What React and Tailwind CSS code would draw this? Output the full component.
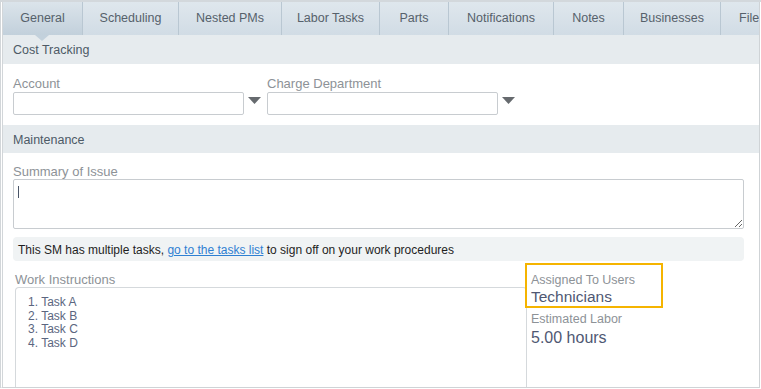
const tabs = [
  { name: 'General', w: 'w-[80px]', active: true },
  { name: 'Scheduling', w: 'w-[96px]' },
  { name: 'Nested PMs', w: 'w-[103px]' },
  { name: 'Labor Tasks', w: 'w-[98px]' },
  { name: 'Parts', w: 'w-[69px]' },
  { name: 'Notifications', w: 'w-[105px]' },
  { name: 'Notes', w: 'w-[70px]' },
  { name: 'Businesses', w: 'w-[97px]' },
  { name: 'Files', w: 'w-[80px]', left: true },
];

const tasks = ['Task A', 'Task B', 'Task C', 'Task D'];

function Caret() {
  return (
    <svg width="13" height="8" viewBox="0 0 13 8" className="ml-[4px] mt-[-6px] shrink-0">
      <path d="M0 0 H13 L6.5 7 Z" fill="#666a6e" />
    </svg>
  );
}

function SectionHeader({ children, h }) {
  return (
    <div className={`${h} flex items-center bg-[#e6ebee] pl-[10px] pt-[2px] text-[12.5px] text-[#4d5a66]`}>
      {children}
    </div>
  );
}

function SelectField({ label }) {
  return (
    <div className="flex flex-col">
      <div className="h-[16px] text-[13px] leading-[18px] text-[#8d9297] mb-[1px]">{label}</div>
      <div className="flex items-center">
        <div className="h-[23px] w-[231px] rounded-[2px] border border-[#c8ccd0] bg-white" />
        <Caret />
      </div>
    </div>
  );
}

export default function App() {
  return (
    <div className="h-[389px] w-[761px] overflow-hidden bg-white font-['Liberation_Sans',Arial,sans-serif]">
      <div className="h-[2px] bg-[#d3d8dc]" />
      <div className="flex h-[386px] w-[760px] flex-col overflow-hidden border-b border-l-[3px] border-r border-double border-b-[#cfd3d6] border-l-[#d2d6d9] border-r-[#cfd3d6] border-b-solid">
        {/* tab strip */}
        <div className="relative flex h-[33px] shrink-0 overflow-hidden">
          {tabs.map((t) => (
            <div
              key={t.name}
              className={`${t.w} flex h-full shrink-0 items-center border-r border-[#b9c7d2] text-[12.5px] text-[#56616b] ${
                t.left ? 'justify-start pl-[18px]' : 'justify-center'
              } ${
                t.active
                  ? 'bg-gradient-to-b from-[#dbe4eb] to-[#c2d0db]'
                  : 'bg-gradient-to-b from-[#dfe7ed] to-[#d1dce5]'
              }`}
            >
              {t.name}
            </div>
          ))}
        </div>
        <div className="relative">
          <svg width="14" height="6" viewBox="0 0 14 6" className="absolute left-[32px] top-0">
            <path d="M0 0 H14 L7 6 Z" fill="#c3d1dc" />
          </svg>
        </div>

        <SectionHeader h="h-[29px]">Cost Tracking</SectionHeader>
        <div className="flex gap-[6px] pl-[10px] pt-[11px] pb-[10px]">
          <SelectField label="Account" />
          <SelectField label="Charge Department" />
        </div>

        <SectionHeader h="h-[28px]">Maintenance</SectionHeader>
        <div className="flex flex-1 flex-col pl-[10px] pr-[15px] pt-[10px]">
          <div className="h-[16px] text-[13px] leading-[18px] text-[#8d9297]">Summary of Issue</div>
          <div className="relative h-[50px] w-[731px]">
            <textarea
              readOnly
              className="block h-full w-full resize rounded-[2px] border border-[#c8ccd0] bg-white outline-none"
            />
            <span className="absolute left-[5px] top-[7px] h-[12px] w-px bg-[#4a5568]" />
          </div>
          <div className="mt-[8px] flex h-[24px] w-[731px] items-center rounded-[4px] bg-[#f0f3f4] pl-[5px] pt-[1px] text-[12px] text-[#1e1e1e]">
            This SM has multiple tasks,&nbsp;
            <a href="#" className="text-[#2f80d2] underline">go to the tasks list</a>
            &nbsp;to sign off on your work procedures
          </div>

          <div className="mt-[2px] flex flex-1">
            <div className="ml-[2px] flex w-[512px] flex-col pt-[8px]">
              <div className="h-[16px] text-[13px] leading-[18px] text-[#8d9297]">Work Instructions</div>
              <div className="flex-1 rounded-t-[4px] border border-b-0 border-[#d5d9dc] pl-[12px] pt-[8px]">
                <ol className="text-[12px] leading-[13.7px] text-[#5b6680]">
                  {tasks.map((t, i) => (
                    <li key={t}>{i + 1}. {t}</li>
                  ))}
                </ol>
              </div>
            </div>
            <div className="-ml-[2px] flex flex-col">
              <div className="relative z-10 h-[45px] w-[138px] border-2 border-[#f5b400] bg-white pl-[4px] pt-[7px]">
                <div className="h-[15px] text-[12.5px] leading-[17px] text-[#8d9297]">Assigned To Users</div>
                <div className="text-[15.5px] leading-[19px] text-[#4f5873]">Technicians</div>
              </div>
              <div className="pl-[6px] pt-[3px]">
                <div className="h-[16px] text-[12.5px] leading-[16px] text-[#8d9297]">Estimated Labor</div>
                <div className="text-[16px] leading-[22px] text-[#4f5873]">5.00 hours</div>
              </div>
            </div>
          </div>
        </div>
      </div>
    </div>
  );
}
